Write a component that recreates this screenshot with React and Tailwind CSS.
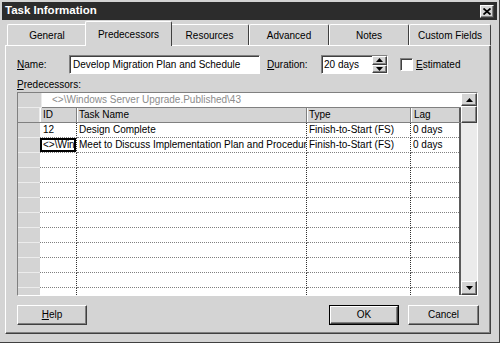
const tabs = ["General", "Predecessors", "Resources", "Advanced", "Notes", "Custom Fields"];
const tabWidths = ["w-[80px]", "w-[83px]", "w-[79px]", "w-[80px]", "w-[80px]", "w-[82px]"];

const rows = [
  { id: "12", name: "Design Complete", type: "Finish-to-Start (FS)", lag: "0 days" },
  {
    id: "<>\\Windows Server Upgrade.Published\\43",
    name: "Meet to Discuss Implementation Plan and Procedures",
    type: "Finish-to-Start (FS)",
    lag: "0 days",
    focus: true,
  },
];

const raised = "border border-t-white border-l-white border-r-[#404040] border-b-[#404040] shadow-[inset_-1px_-1px_0_#808080]";
const sunken = "border border-t-[#808080] border-l-[#808080] border-r-white border-b-white shadow-[inset_1px_1px_0_#404040]";

const Tri = ({ down }) => (
  <svg width="7" height="4" viewBox="0 0 7 4">
    <path d={down ? "M0 0h7L3.5 4z" : "M0 4h7L3.5 0z"} fill="#000" />
  </svg>
);

const Mn = ({ c }) => <span className="underline underline-offset-1">{c}</span>;

export default function App() {
  const blank = Array.from({ length: 10 });
  return (
    <div className="w-[500px] h-[343px] bg-[#d4d4d4] p-[2px] border-r border-b border-[#404040] overflow-hidden font-['Liberation_Sans',Arial,sans-serif] text-[10px] text-black leading-none">
      {/* title bar */}
      <div className="h-[18px] bg-[#2c2c2c] flex items-center justify-between pl-[3px] pr-[3px]">
        <span className="text-white font-bold text-[11.5px]">Task Information</span>
        <div className={`w-[14px] h-[13px] bg-[#d4d4d4] flex items-center justify-center ${raised}`}>
          <svg width="8" height="7" viewBox="0 0 8 7">
            <path d="M0.5 0.5L7.5 6.5M7.5 0.5L0.5 6.5" stroke="#000" strokeWidth="1.8" />
          </svg>
        </div>
      </div>

      {/* tabs */}
      <div className="h-[25px] flex items-end pl-[5px]">
        {tabs.map((t, i) =>
          i === 1 ? (
            <div
              key={t}
              className="relative z-10 -mx-[2px] w-[87px] h-[25px] -mb-[1px] bg-[#d4d4d4] border-l border-t border-r border-l-white border-t-white border-r-[#404040] rounded-t-[2px] flex justify-center pt-[8px]"
            >
              {t}
            </div>
          ) : (
            <div
              key={t}
              className={`${tabWidths[i]} h-[21px] border-l border-t border-r border-l-white border-t-white border-r-[#404040] rounded-t-[2px] flex justify-center pt-[6px]`}
            >
              {t}
            </div>
          )
        )}
      </div>

      {/* panel */}
      <div className="ml-[3px] w-[486px] h-[289px] border border-t-white border-l-white border-r-[#404040] border-b-[#404040] shadow-[inset_-1px_-1px_0_#808080] pl-[11px] pt-[9px]">
        <div className="flex items-center h-[19px]">
          <span className="w-[52px]">
            <Mn c="N" />ame:
          </span>
          <div className={`w-[191px] h-[19px] bg-white flex items-center pl-[3px] ${sunken}`}>
            Develop Migration Plan and Schedule
          </div>
          <span className="ml-[7px] w-[54px]">
            <Mn c="D" />uration:
          </span>
          <div className={`w-[67px] h-[19px] bg-white flex items-center justify-between pl-[2px] ${sunken}`}>
            <span>20 days</span>
            <div className="w-[15px] h-[17px] flex flex-col">
              <div className={`flex-1 bg-[#d4d4d4] flex items-center justify-center ${raised}`}>
                <Tri />
              </div>
              <div className={`flex-1 bg-[#d4d4d4] flex items-center justify-center ${raised}`}>
                <Tri down />
              </div>
            </div>
          </div>
          <div className={`ml-[12px] w-[13px] h-[13px] bg-white ${sunken}`} />
          <span className="ml-[3px]">
            <Mn c="E" />stimated
          </span>
        </div>

        <div className="mt-[6px] h-[12px]">
          <Mn c="P" />redecessors:
        </div>

        {/* grid */}
        <div className={`w-[461px] h-[204px] flex overflow-hidden ${sunken}`}>
          <div className="flex-1 flex flex-col overflow-hidden">
            <div className="h-[15px] flex shrink-0">
              <div className="w-[24px] bg-[#d4d4d4] border-r border-b border-[#ececec]" />
              <div className="flex-1 bg-white text-[#8c8c8c] flex items-center pl-[10px] border-b border-[#808080]">
                {"<>\\Windows Server Upgrade.Published\\43"}
              </div>
            </div>
            <div className="h-[15px] flex shrink-0 bg-[#d4d4d4] border-b border-[#808080]">
              <div className="w-[22px] border-r border-[#ececec]" />
              <div className="w-[37px] border-l border-l-white border-r border-r-[#808080] flex items-center pl-[2px]">ID</div>
              <div className="w-[230px] border-l border-l-white border-r border-r-[#808080] flex items-center pl-[1px]">Task Name</div>
              <div className="w-[104px] border-l border-l-white border-r border-r-[#808080] flex items-center pl-[1px]">Type</div>
              <div className="w-[48px] border-l border-l-white flex items-center pl-[2px]">Lag</div>
              <div className="w-[2px] bg-[#5a5a5a]" />
            </div>
            {rows.map((r, i) => (
              <div key={i} className="h-[15px] flex shrink-0">
                <div className="w-[22px] bg-[#d4d4d4] border-b border-[#ececec]" />
                <div
                  className={`w-[37px] bg-white border-r border-b border-dotted border-r-[#303030] border-b-[#808080] flex items-center pl-[3px] overflow-hidden whitespace-nowrap ${
                    r.focus ? "shadow-[inset_0_0_0_2px_#000]" : ""
                  }`}
                >
                  {r.id}
                </div>
                <div className="w-[230px] bg-white border-r border-b border-dotted border-r-[#303030] border-b-[#808080] flex items-center pl-[2px] overflow-hidden whitespace-nowrap">
                  {r.name}
                </div>
                <div className="w-[104px] bg-white border-r border-b border-dotted border-r-[#303030] border-b-[#808080] flex items-center pl-[2px] whitespace-nowrap">
                  {r.type}
                </div>
                <div className="w-[48px] bg-white border-b border-dotted border-b-[#808080] flex items-center pl-[2px]">
                  {r.lag}
                </div>
                <div className="w-[2px] bg-[#5a5a5a]" />
              </div>
            ))}
            {blank.map((_, i) => (
              <div key={i} className="h-[15px] flex shrink-0">
                <div className="w-[22px] bg-[#d4d4d4] border-b border-[#ececec]" />
                <div className="w-[37px] bg-white border-r border-b border-dotted border-r-[#303030] border-b-[#808080]" />
                <div className="w-[230px] bg-white border-r border-b border-dotted border-r-[#303030] border-b-[#808080]" />
                <div className="w-[104px] bg-white border-r border-b border-dotted border-r-[#303030] border-b-[#808080]" />
                <div className="w-[48px] bg-white border-b border-dotted border-b-[#808080]" />
                <div className="w-[2px] bg-[#5a5a5a]" />
              </div>
            ))}
          </div>

          {/* scrollbar */}
          <div className="w-[16px] flex flex-col shrink-0">
            <div className={`h-[13px] bg-[#d4d4d4] flex items-center justify-center ${raised}`}>
              <Tri />
            </div>
            <div className={`h-[17px] bg-[#d4d4d4] ${raised}`} />
            <div className="flex-1 bg-[#ebebeb]" />
            <div className={`h-[14px] bg-[#d4d4d4] flex items-center justify-center ${raised}`}>
              <Tri down />
            </div>
          </div>
        </div>

        {/* buttons */}
        <div className="mt-[9px] w-[462px] flex justify-between">
          <button className={`w-[70px] h-[20px] bg-[#d4d4d4] flex items-center justify-center ${raised}`}>
            <span>
              <Mn c="H" />elp
            </span>
          </button>
          <div className="flex gap-[9px]">
            <button className="w-[70px] h-[20px] border border-black">
              <div className={`w-full h-full bg-[#d4d4d4] flex items-center justify-center ${raised}`}>OK</div>
            </button>
            <button className={`w-[71px] h-[20px] bg-[#d4d4d4] flex items-center justify-center ${raised}`}>
              Cancel
            </button>
          </div>
        </div>
      </div>
    </div>
  );
}
